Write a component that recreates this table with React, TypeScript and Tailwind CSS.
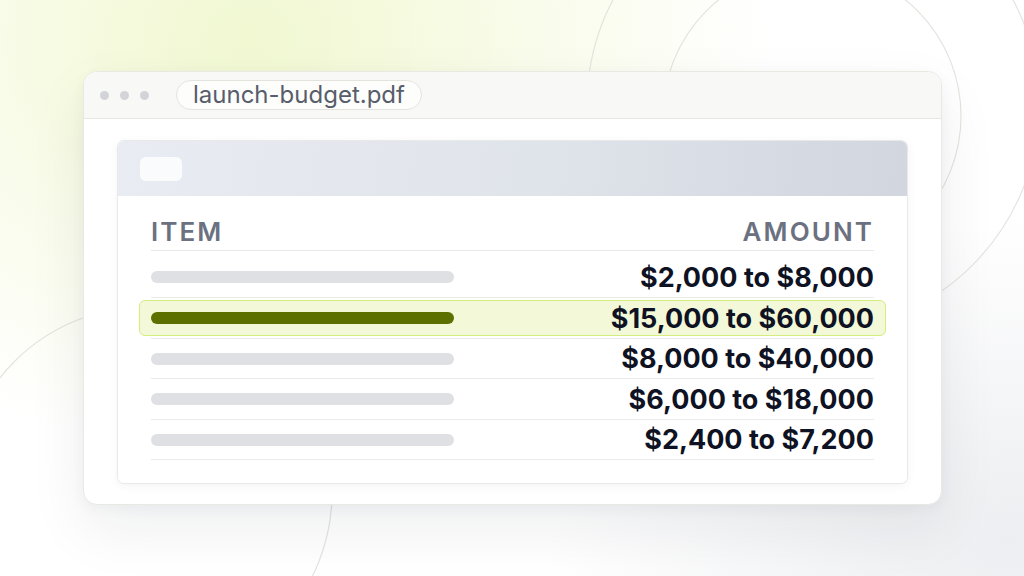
import React from "react";

const rows = [
  { amount: "$2,000 to $8,000", hl: false, h: "h-[41px]" },
  { amount: "$15,000 to $60,000", hl: true, h: "h-[41px]" },
  { amount: "$8,000 to $40,000", hl: false, h: "h-[40px]" },
  { amount: "$6,000 to $18,000", hl: false, h: "h-[41px]" },
  { amount: "$2,400 to $7,200", hl: false, h: "h-[40px]" },
];

export default function App() {
  return (
    <div className="relative w-[1024px] h-[576px] overflow-hidden bg-white font-['Inter',sans-serif]">
      <div className="absolute inset-0 bg-[radial-gradient(ellipse_520px_420px_at_250px_40px,#f1f8d1_0%,#f7fbe4_40%,rgba(255,255,255,0)_100%)]" />
      <div className="absolute inset-0 bg-[radial-gradient(ellipse_460px_320px_at_1010px_540px,#edeef1_0%,rgba(255,255,255,0)_100%)]" />
      <svg className="absolute inset-0" width="1024" height="576" viewBox="0 0 1024 576" fill="none">
        <circle cx="812" cy="116" r="149" stroke="#e4e4df" strokeWidth="1.2" />
        <circle cx="813" cy="105" r="226" stroke="#e4e4df" strokeWidth="1.2" />
        <circle cx="146" cy="493" r="186" stroke="#e4e4df" strokeWidth="1.2" />
      </svg>

      <div className="relative pl-[83px] pt-[71px]">
        <div className="w-[859px] rounded-[14px] border border-[#e9e9e4] bg-white overflow-hidden shadow-[0_24px_60px_rgba(17,24,39,0.07),0_4px_14px_rgba(17,24,39,0.04)]">
          <div className="h-[47px] flex items-center pl-[16px] bg-[#f8f8f6] border-b border-[#e7e7e2]">
            <div className="flex gap-[11px]">
              <span className="w-[9px] h-[9px] rounded-full bg-[#d3d4d8]" />
              <span className="w-[9px] h-[9px] rounded-full bg-[#d3d4d8]" />
              <span className="w-[9px] h-[9px] rounded-full bg-[#d3d4d8]" />
            </div>
            <div className="ml-[27px] h-[30px] flex items-center px-[16px] rounded-full border border-[#e3e3de] bg-[#fdfdfc] text-[24px] leading-none text-[#575d6b]">
              launch-budget.pdf
            </div>
          </div>

          <div className="pt-[21px] pb-[20px] px-[33px]">
            <div className="rounded-[7px] border border-[#e9e9e9] bg-white overflow-hidden shadow-[0_2px_10px_rgba(17,24,39,0.05)]">
              <div className="h-[55px] flex items-center pl-[22px] bg-[linear-gradient(100deg,#e9ecf2_0%,#dfe3ea_55%,#d1d6df_100%)]">
                <div className="w-[42px] h-[24px] rounded-[6px] bg-[#fafbfc]" />
              </div>
              <div className="px-[33px] pt-[21px] pb-[23px]">
                <div className="flex justify-between items-center pb-[3px] border-b border-[#e8e8e6] text-[26px] leading-[30px] font-semibold tracking-[0.08em] text-[#6b7180]">
                  <span>ITEM</span>
                  <span>AMOUNT</span>
                </div>
                <div className="pt-[6px]">
                  {rows.map((r) => (
                    <div key={r.amount} className={`${r.h} py-[2px] border-b border-[#ebebe8]`}>
                      <div
                        className={
                          r.hl
                            ? "-mx-[12px] px-[11px] h-full flex items-center justify-between rounded-[6px] border-[1.5px] border-[#d4ed7e] bg-[#f2f8d8]"
                            : "-mx-[12px] px-[11px] h-full flex items-center justify-between rounded-[6px] border-[1.5px] border-transparent"
                        }
                      >
                        <div className={r.hl ? "w-[303px] h-[12px] rounded-full bg-[#5c7000]" : "w-[303px] h-[12px] rounded-full bg-[#dfe0e4]"} />
                        <span className="text-[27px] leading-none font-bold text-[#0e1222]">{r.amount}</span>
                      </div>
                    </div>
                  ))}
                </div>
              </div>
            </div>
          </div>
        </div>
      </div>
    </div>
  );
}
